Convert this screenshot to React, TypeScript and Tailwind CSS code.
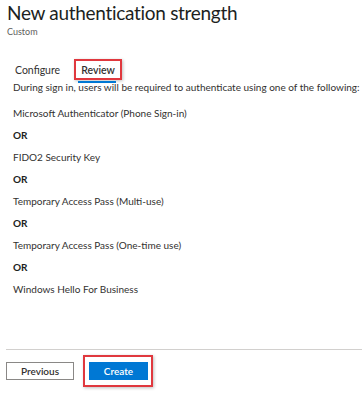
export default function App() {
  const methods = [
    "Microsoft Authenticator (Phone Sign-in)",
    "FIDO2 Security Key",
    "Temporary Access Pass (Multi-use)",
    "Temporary Access Pass (One-time use)",
    "Windows Hello For Business",
  ];

  return (
    <main
      className="w-[362px] h-[399px] bg-white overflow-hidden text-[#323130]"
      style={{ fontFamily: 'Lato, "Open Sans", sans-serif' }}
    >
      {/* Header */}
      <header className="pl-[7px]">
        <h1 className="text-[19px] leading-[26px] font-normal text-[#201f1e] tracking-[-0.3px]">
          New authentication strength
        </h1>
        <p className="text-[9px] leading-[12px] text-[#605e5c]">Custom</p>
      </header>

      {/* Tabs */}
      <nav className="flex items-end gap-[18px] pl-[15px] mt-[22px] h-[20px]">
        <span className="text-[10.5px] leading-[14px] pb-[3px]">Configure</span>
        <span className="relative text-[10.5px] leading-[14px] pb-[3px] px-[3px] font-semibold">
          Review
          <span className="absolute -left-[4px] -right-[4px] -top-[4px] bottom-0 border-[2px] border-[#e0383e] shadow-[1px_1px_3px_rgba(0,0,0,0.25)]" />
          <span className="absolute left-[0px] right-[2px] -bottom-[3px] h-[2px] bg-[#0078d4]" />
        </span>
      </nav>

      {/* Review content */}
      <section className="pl-[13px] pt-0 text-[10px] leading-[14px]">
        <p className="h-[22px] whitespace-nowrap">
          During sign in, users will be required to authenticate using one of the following:
        </p>
        <div className="flex flex-col">
          {methods.map((m, i) => (
            <div key={m} className="flex flex-col">
              <p className="h-[22px] pt-[4px]">{m}</p>
              {i < methods.length - 1 && (
                <p className="h-[22px] pt-[4px] font-bold text-[#201f1e]">OR</p>
              )}
            </div>
          ))}
        </div>
      </section>

      {/* Footer */}
      <footer className="mt-[49px] ml-[6px] border-t border-[#d2d0ce] pt-[12px] flex items-center gap-[15px]">
        <button className="w-[68px] h-[18px] border border-[#8a8886] text-[10px] leading-[16px] font-semibold text-[#323130] bg-white">
          Previous
        </button>
        <span className="relative flex">
          <button className="w-[59px] h-[18px] bg-[#0078d4] text-white text-[10px] leading-[18px] font-semibold">
            Create
          </button>
          <span className="absolute -left-[6px] -right-[5px] -top-[7px] -bottom-[7px] border-[2px] border-[#e0383e] shadow-[1px_1px_3px_rgba(0,0,0,0.25)]" />
        </span>
      </footer>
    </main>
  );
}
